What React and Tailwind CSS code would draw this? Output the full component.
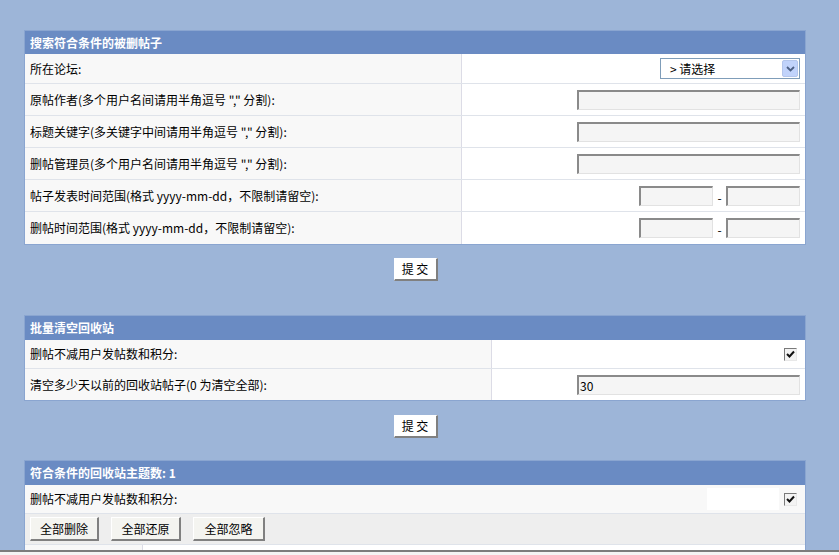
import React from 'react';

const font = { fontFamily: '"Noto Sans CJK SC", "Liberation Sans", sans-serif' };

// sunken text box, classic win style
const TextBox = ({ className = 'w-[223px]', value = '' }) => (
  <div
    className={`h-[20px] bg-[#f5f5f5] border-t-2 border-l-2 border-t-[#8a8a8a] border-l-[#8a8a8a] border-b border-r border-b-[#e2e2e2] border-r-[#e2e2e2] text-[12px] leading-[17px] pl-[1px] ${className}`}
  >
    {value}
  </div>
);

const CheckBox = () => (
  <div className="w-[13px] h-[13px] bg-[#f3f3f3] border-t border-l border-t-[#7a7a7a] border-l-[#7a7a7a] border-b border-r border-b-[#e8e8e8] border-r-[#e8e8e8] flex items-center justify-center">
    <svg width="9" height="9" viewBox="0 0 9 9">
      <path d="M1 4 L3.5 6.5 L8 1.5" fill="none" stroke="#111" strokeWidth="2" />
    </svg>
  </div>
);

const Select = () => (
  <div className="w-[140px] h-[21px] bg-white border border-[#7f9db9] flex items-center justify-between pl-[9px] pr-[1px]">
    <span className="text-[12px] leading-none">&gt; 请选择</span>
    <div className="w-[16px] h-[17px] bg-[#c1d3fb] border border-[#b4c6ec] rounded-[2px] flex items-center justify-center">
      <svg width="9" height="6" viewBox="0 0 9 6">
        <path d="M1 1 L4.5 4.5 L8 1" fill="none" stroke="#4d6185" strokeWidth="1.8" />
      </svg>
    </div>
  </div>
);

const WinButton = ({ children, className = 'h-[24px] bg-[#f4f4f0]' }) => (
  <button
    className={`border-t border-l border-t-white border-l-white border-b-2 border-r-2 border-b-[#808080] border-r-[#808080] text-[12px] leading-none text-black ${className}`}
    style={font}
  >
    {children}
  </button>
);

const Header = ({ children, h = 'h-[23px]' }) => (
  <div className={`${h} bg-[#6a8bc3] flex items-center pl-[5px] text-white font-bold text-[12px]`}>
    {children}
  </div>
);

const Row = ({ label, split, h, last, children }) => (
  <div className={`flex ${h} ${last ? '' : 'border-b border-[#dfe3ea]'}`}>
    <div
      className="bg-[#f8f8f8] border-r border-[#dcdce6] flex items-center pl-[5px] text-[12px]"
      style={{ width: split }}
    >
      {label}
    </div>
    <div className="flex-1 bg-white flex items-center justify-end pr-[5px]">{children}</div>
  </div>
);

const DateRange = () => (
  <div className="flex items-center">
    <TextBox className="w-[74px]" />
    <span className="w-[13px] text-center text-[12px] leading-none pt-[4px]">-</span>
    <TextBox className="w-[74px]" />
  </div>
);

export default function App() {
  return (
    <div className="h-[555px] w-[839px] overflow-hidden flex flex-col text-black" style={font}>
      <div className="h-[550px] overflow-hidden bg-[#9db5d8] pt-[30px]">
        {/* search deleted posts */}
        <div className="ml-[24px] w-[782px] border border-[#8aa5d0]">
          <Header>搜索符合条件的被删帖子</Header>
          <Row label="所在论坛:" split={437} h="h-[30px]">
            <Select />
          </Row>
          <Row label={'原帖作者(多个用户名间请用半角逗号 "," 分割):'} split={437} h="h-[32px]">
            <TextBox />
          </Row>
          <Row label={'标题关键字(多关键字中间请用半角逗号 "," 分割):'} split={437} h="h-[32px]">
            <TextBox />
          </Row>
          <Row label={'删帖管理员(多个用户名间请用半角逗号 "," 分割):'} split={437} h="h-[32px]">
            <TextBox />
          </Row>
          <Row label="帖子发表时间范围(格式 yyyy-mm-dd，不限制请留空):" split={437} h="h-[32px]">
            <DateRange />
          </Row>
          <Row label="删帖时间范围(格式 yyyy-mm-dd，不限制请留空):" split={437} h="h-[32px]" last>
            <DateRange />
          </Row>
        </div>

        <div className="flex justify-center mt-[13px] pr-[8px]">
          <WinButton className="w-[44px] h-[23px] bg-white">提 交</WinButton>
        </div>

        {/* empty recycle bin */}
        <div className="ml-[24px] mt-[34px] w-[782px] border border-[#8aa5d0]">
          <Header h="h-[24px]">批量清空回收站</Header>
          <Row label="删帖不减用户发帖数和积分:" split={467} h="h-[29px]">
            <div className="mr-[3px]">
              <CheckBox />
            </div>
          </Row>
          <Row label="清空多少天以前的回收站帖子(0 为清空全部):" split={467} h="h-[31px]" last>
            <TextBox value="30" />
          </Row>
        </div>

        <div className="flex justify-center mt-[14px] pr-[8px]">
          <WinButton className="w-[44px] h-[23px] bg-white">提 交</WinButton>
        </div>

        {/* results */}
        <div className="ml-[24px] mt-[22px] w-[782px] border border-[#8aa5d0]">
          <Header h="h-[24px]">符合条件的回收站主题数: 1</Header>
          <div className="flex h-[29px] border-b border-[#dfe3ea] bg-[#f8f8f8] items-center">
            <div className="flex-1 pl-[5px] text-[12px]">删帖不减用户发帖数和积分:</div>
            <div className="w-[72px] h-[22px] bg-white" />
            <div className="ml-[5px] mr-[8px]">
              <CheckBox />
            </div>
          </div>
          <div className="flex h-[31px] border-b border-[#dfe3ea] bg-[#eeeeee] items-center pl-[5px] gap-[12px]">
            <WinButton className="w-[69px] h-[24px] bg-[#f4f4f0]">全部删除</WinButton>
            <WinButton className="w-[70px] h-[24px] bg-[#f4f4f0]">全部还原</WinButton>
            <WinButton className="w-[72px] h-[24px] bg-[#f4f4f0]">全部忽略</WinButton>
          </div>
          <div className="flex h-[20px]">
            <div className="w-[118px] bg-[#f8f8f8] border-r border-[#dcdce6]" />
            <div className="flex-1 bg-white" />
          </div>
        </div>
      </div>
      <div className="h-[2px] bg-[#7c7c7c]" />
      <div className="flex-1 bg-[#f4f4f4]" />
    </div>
  );
}
